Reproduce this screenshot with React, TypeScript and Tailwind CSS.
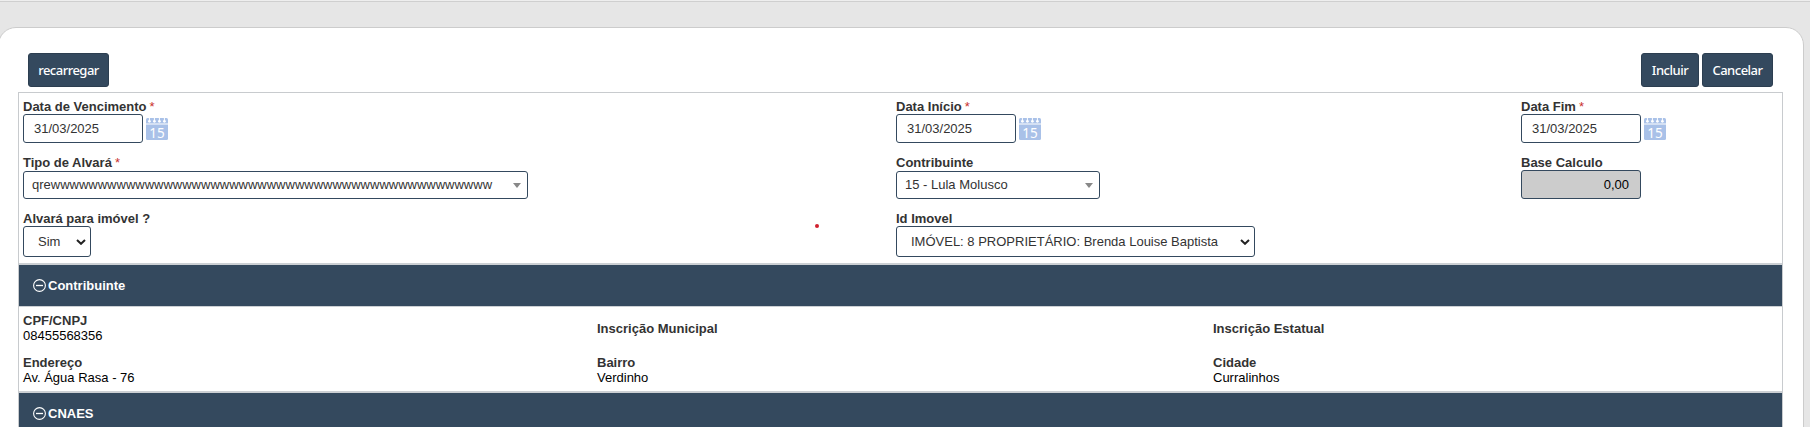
import type { ReactNode } from "react";

function ActionButton({ children, className }: { children: string; className: string }) {
  return (
    <button
      type="button"
      className={`h-[34px] shrink-0 rounded-[3px] border border-[#2c3e50] bg-[#34495e] pt-px text-center font-['Noto_Sans',sans-serif] text-[13px] leading-none font-medium tracking-[-0.5px] text-white ${className}`}
    >
      {children}
    </button>
  );
}

function Label({ children, required }: { children: string; required?: boolean }) {
  return (
    <div className="h-[15px] text-[13px] leading-[16px] font-bold whitespace-nowrap text-[#333]">
      {children}
      {required && <span className="ml-[3px] font-normal text-[#c9302c]">*</span>}
    </div>
  );
}

function CalendarIcon() {
  return (
    <svg width="22" height="22" viewBox="0 0 22 22" className="mt-px ml-[3px] shrink-0 overflow-visible">
      <path d="M0 1.5Q0 0 1.5 0H20.5Q22 0 22 1.5V5.6H0Z" fill="#a9c1e8" />
      <path d="M0 6.5H22V20.5Q22 22 20.5 22H1.5Q0 22 0 20.5Z" fill="#a9c1e8" />
      {[3.4, 8.4, 13.4, 18.4].map((x) => (
        <g key={x} fill="#fff">
          <rect x={x - 0.5} y="0" width="1" height="3" />
          <circle cx={x} cy="3.3" r="1.4" />
        </g>
      ))}
      <text x="3.2" y="19.5" fontFamily="Noto Sans, sans-serif" fontSize="13.5" fill="#fff">
        15
      </text>
    </svg>
  );
}

function DateField({ label, value }: { label: string; value: string }) {
  return (
    <div>
      <Label required>{label}</Label>
      <div className="flex items-center">
        <div className="flex h-[29px] w-[120px] items-center rounded-[3px] border border-[#34495e] pl-[10px] text-[13px] text-[#333]">
          {value}
        </div>
        <CalendarIcon />
      </div>
    </div>
  );
}

function Combo({ value, className }: { value: string; className: string }) {
  return (
    <div
      className={`mt-px flex h-[28px] items-center justify-between rounded-[3px] border border-[#34495e] pr-[6px] pl-[8px] text-[13px] text-[#333] ${className}`}
    >
      <span className="whitespace-nowrap">{value}</span>
      <svg width="8" height="5" viewBox="0 0 8 5" className="shrink-0">
        <path d="M0 0H8L4 5Z" fill="#888" />
      </svg>
    </div>
  );
}

function NativeSelect({ value, className }: { value: string; className: string }) {
  return (
    <div
      className={`flex h-[31px] items-center justify-between rounded-[3px] border border-[#34495e] pr-[4px] pl-[14px] text-[13px] text-[#333] ${className}`}
    >
      <span className="whitespace-nowrap">{value}</span>
      <svg width="10" height="6" viewBox="0 0 10 6" className="shrink-0">
        <path d="M1 1L5 4.8L9 1" fill="none" stroke="#222" strokeWidth="2" />
      </svg>
    </div>
  );
}

function SectionHeader({ children }: { children: string }) {
  return (
    <div className="flex h-[43px] items-center border-t-2 border-[#ccd0d4] bg-[#34495e] pl-[14px] text-[13px] font-bold text-white">
      <svg width="13" height="13" viewBox="0 0 13 13" className="mr-[2px] shrink-0">
        <circle cx="6.5" cy="6.5" r="5.9" fill="none" stroke="#fff" strokeWidth="1.1" />
        <path d="M3 6.5H10" stroke="#fff" strokeWidth="1.3" />
      </svg>
      {children}
    </div>
  );
}

function Info({ label, children }: { label: string; children?: ReactNode }) {
  return (
    <div className="flex flex-col justify-center text-[13px] leading-[15px] whitespace-nowrap">
      <div className="font-bold text-[#333]">{label}</div>
      {children && <div className="text-black">{children}</div>}
    </div>
  );
}

export default function App() {
  return (
    <div className="h-[427px] w-[1810px] overflow-hidden bg-[#e6e6e6] font-['Liberation_Sans',sans-serif]">
      <div className="h-[2px] border-b border-[#cfcfcf] bg-[#eeeeee]" />
      <main className="mt-[25px] -ml-[2px] h-[420px] w-[1806px] rounded-t-[18px] border border-[#cccccc] bg-white pr-[20px] pl-[19px]">
        <div className="flex h-[64px] items-start pt-[25px] pr-[10px] pl-[10px]">
          <ActionButton className="w-[81px]">recarregar</ActionButton>
          <div className="ml-auto flex gap-[3px]">
            <ActionButton className="w-[58px]">Incluir</ActionButton>
            <ActionButton className="w-[71px]">Cancelar</ActionButton>
          </div>
        </div>
        <div className="border border-[#c8cbce]">
          <section className="relative grid h-[170px] grid-cols-[873px_625px_1fr] grid-rows-[56px_56px_52px] pt-[6px] pl-[4px]">
            <DateField label="Data de Vencimento" value="31/03/2025" />
            <DateField label="Data Início" value="31/03/2025" />
            <DateField label="Data Fim" value="31/03/2025" />
            <div>
              <Label required>Tipo de Alvará</Label>
              <Combo value="qrewwwwwwwwwwwwwwwwwwwwwwwwwwwwwwwwwwwwwwwwwwwwwww" className="w-[505px]" />
            </div>
            <div>
              <Label>Contribuinte</Label>
              <Combo value="15 - Lula Molusco" className="w-[204px]" />
            </div>
            <div>
              <Label>Base Calculo</Label>
              <div className="flex h-[29px] w-[120px] items-center justify-end rounded-[3px] border border-[#34495e] bg-[#cccccc] pr-[11px] text-[13px] text-black">
                0,00
              </div>
            </div>
            <div>
              <Label>Alvará para imóvel ?</Label>
              <NativeSelect value="Sim" className="w-[68px]" />
            </div>
            <div>
              <Label>Id Imovel</Label>
              <NativeSelect value="IMÓVEL: 8 PROPRIETÁRIO: Brenda Louise Baptista" className="w-[359px]" />
            </div>
            <span className="absolute top-[131px] left-[796px] size-[4px] rounded-full bg-[#d0202e]" />
          </section>
          <SectionHeader>Contribuinte</SectionHeader>
          <section className="grid h-[85px] grid-cols-[574px_616px_1fr] grid-rows-[30px_30px] gap-y-[12px] border-t border-[#ccd0d4] pt-[6px] pl-[4px]">
            <Info label="CPF/CNPJ">08455568356</Info>
            <Info label="Inscrição Municipal" />
            <Info label="Inscrição Estatual" />
            <Info label="Endereço">Av. Água Rasa - 76</Info>
            <Info label="Bairro">Verdinho</Info>
            <Info label="Cidade">Curralinhos</Info>
          </section>
          <SectionHeader>CNAES</SectionHeader>
        </div>
      </main>
    </div>
  );
}
